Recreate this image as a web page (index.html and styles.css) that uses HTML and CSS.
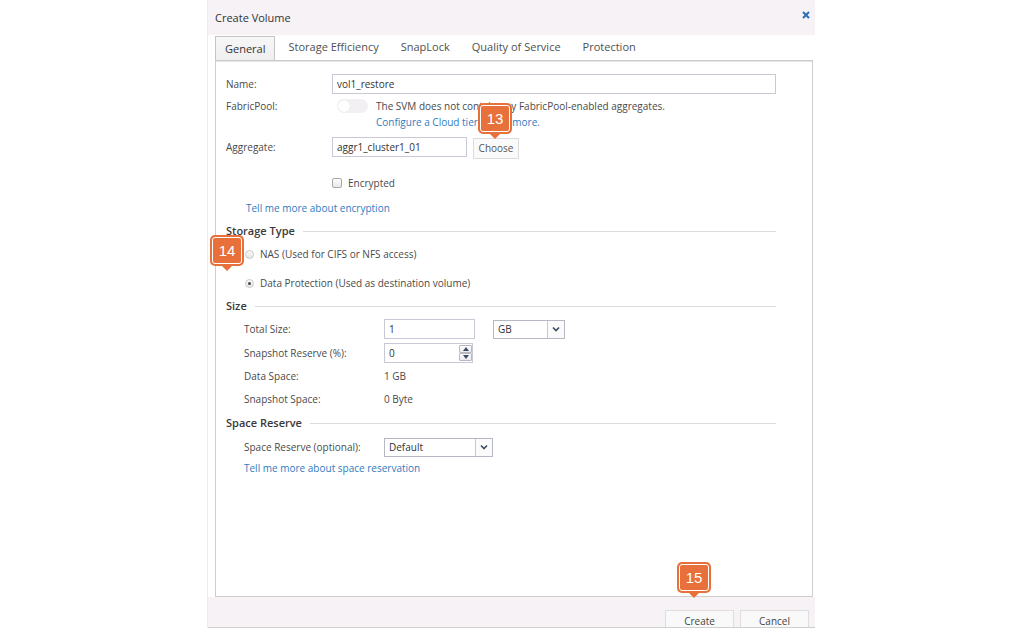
FILE: index.html
```html
<!DOCTYPE html>
<html>
<head>
<meta charset="utf-8">
<link rel="stylesheet" href="styles.css">
</head>
<body>
<div class="dialog">
  <div class="header">
    <span class="title">Create Volume</span>
    <span class="close"><svg width="8" height="8" viewBox="0 0 8 8"><path d="M1 1 L7 7 M7 1 L1 7" stroke="#2b6cb8" stroke-width="2" fill="none"/></svg></span>
  </div>
  <div class="tabs">
    <div class="tab active">General</div>
    <div class="tab">Storage Efficiency</div>
    <div class="tab">SnapLock</div>
    <div class="tab">Quality of Service</div>
    <div class="tab">Protection</div>
  </div>
  <div class="panel">
    <div class="row r-name">
      <span class="lbl">Name:</span>
      <div class="input w-name">vol1_restore</div>
    </div>
    <div class="row r-fabric">
      <span class="lbl">FabricPool:</span>
      <span class="toggle"><span class="knob"></span></span>
      <div class="fabric-text">
        <div class="line">The SVM does not contain any FabricPool-enabled aggregates.</div>
        <div class="line"><span class="link">Configure a Cloud tier.</span> <span class="link">Learn more.</span></div>
      </div>
    </div>
    <div class="row r-aggr">
      <span class="lbl">Aggregate:</span>
      <div class="input w-aggr">aggr1_cluster1_01</div>
      <div class="btn-choose">Choose</div>
    </div>
    <div class="row r-enc">
      <span class="checkbox"></span>
      <span class="txt">Encrypted</span>
    </div>
    <div class="row r-enclink"><span class="link">Tell me more about encryption</span></div>
    <div class="heading h-storage"><span>Storage Type</span><span class="rule"></span></div>
    <div class="row r-nas"><span class="radio"></span><span class="txt">NAS (Used for CIFS or NFS access)</span></div>
    <div class="row r-dp"><span class="radio checked"></span><span class="txt">Data Protection (Used as destination volume)</span></div>
    <div class="heading h-size"><span>Size</span><span class="rule"></span></div>
    <div class="row srow r-total">
      <span class="slbl">Total Size:</span>
      <div class="input w-num">1</div>
      <div class="select w-gb"><span class="sel-val">GB</span><span class="sel-arrow"><svg width="8" height="6" viewBox="0 0 8 6"><path d="M1 1.5 L4 4.5 L7 1.5" fill="none" stroke="#3d4a66" stroke-width="1.6"/></svg></span></div>
    </div>
    <div class="row srow r-snap">
      <span class="slbl">Snapshot Reserve (%):</span>
      <div class="input w-spin"><span class="spin-val">0</span><span class="spin"><span class="sp-btn"><svg width="6" height="4" viewBox="0 0 6 4"><path d="M0 4 L3 0 L6 4Z" fill="#3d4a66"/></svg></span><span class="sp-btn"><svg width="6" height="4" viewBox="0 0 6 4"><path d="M0 0 L3 4 L6 0Z" fill="#3d4a66"/></svg></span></span></div>
    </div>
    <div class="row srow r-data"><span class="slbl">Data Space:</span><span class="txt">1 GB</span></div>
    <div class="row srow r-sspace"><span class="slbl">Snapshot Space:</span><span class="txt">0 Byte</span></div>
    <div class="heading h-reserve"><span>Space Reserve</span><span class="rule"></span></div>
    <div class="row srow r-resopt">
      <span class="slbl">Space Reserve (optional):</span>
      <div class="select w-def"><span class="sel-val">Default</span><span class="sel-arrow"><svg width="8" height="6" viewBox="0 0 8 6"><path d="M1 1.5 L4 4.5 L7 1.5" fill="none" stroke="#3d4a66" stroke-width="1.6"/></svg></span></div>
    </div>
    <div class="row r-reslink"><span class="link">Tell me more about space reservation</span></div>
  </div>
  <div class="footer">
    <div class="btn">Create</div>
    <div class="btn">Cancel</div>
  </div>
</div>
<div class="callout c13"><span>13</span></div>
<div class="callout c14"><span>14</span></div>
<div class="callout c15"><span>15</span></div>
</body>
</html>
```

FILE: styles.css
```css
html, body {
  margin: 0;
  padding: 0;
  background: #ffffff;
}
body {
  width: 1024px;
  height: 634px;
  overflow: hidden;
  position: relative;
  font-family: "Open Sans", "DejaVu Sans", sans-serif;
  font-size: 10px;
  color: #4a4a4a;
}
.dialog {
  margin-left: 207px;
  width: 608px;
  height: 628px;
  display: flex;
  flex-direction: column;
  border-left: 1px solid #ececec;
  box-sizing: border-box;
}
.header {
  height: 35px;
  flex: none;
  background: #f6f2f6;
  display: flex;
  align-items: center;
  justify-content: space-between;
  padding: 0 5px 0 7px;
}
.title {
  font-size: 11px;
  color: #333;
}
.close {
  display: flex;
  margin-top: -6px;
}
.tabs {
  height: 25px;
  flex: none;
  display: flex;
  align-items: flex-end;
  padding-left: 7px;
  background: #fff;
}
.tab {
  height: 24px;
  box-sizing: border-box;
  padding: 0 11px 3px;
  display: flex;
  align-items: center;
  font-size: 11px;
  color: #505050;
}
.tab.active {
  padding: 0 9px 1px;
  margin-right: 2px;
  background: linear-gradient(#f7f7f7, #efefef);
  border: 1px solid #c4c4c4;
  border-bottom: none;
  color: #333;
}
.panel {
  flex: 1;
  margin: 0 2px 0 7px;
  border: 1px solid #cdcdcd;
  box-shadow: inset 0 1px 0 #e4e4e4;
  background: #fff;
  padding: 13px 36px 0 10px;
  display: flex;
  flex-direction: column;
}
.row {
  display: flex;
  align-items: center;
  flex: none;
}
.lbl {
  width: 106px;
  flex: none;
}
.input {
  box-sizing: border-box;
  height: 20px;
  border: 1px solid #c9c9d6;
  background: #fff;
  display: flex;
  align-items: center;
  padding-left: 4px;
  color: #333;
  font-size: 10px;
}
.r-name { height: 20px; }
.w-name { flex: 1; }
.r-fabric {
  margin-top: 4px;
  align-items: flex-start;
}
.r-fabric .lbl { line-height: 16px; }
.toggle {
  margin: 1px 0 0 5px;
  width: 31px;
  height: 14px;
  border-radius: 7px;
  background: #f3f0f3;
  position: relative;
  flex: none;
}
.knob {
  position: absolute;
  left: 1px;
  top: 1px;
  width: 12px;
  height: 12px;
  border-radius: 50%;
  background: #fff;
  box-shadow: 0 0 1px rgba(0,0,0,0.12);
}
.fabric-text {
  margin-left: 8px;
  color: #4a4a4a;
}
.fabric-text .line { line-height: 16px; }
.link { color: #2f7cc0; }
.r-aggr {
  margin-top: 7px;
  height: 20px;
}
.w-aggr { width: 135px; }
.btn-choose {
  margin-left: 6px;
  width: 46px;
  height: 21px;
  box-sizing: border-box;
  border: 1px solid #dcdcdc;
  background: #fafafa;
  display: flex;
  align-items: center;
  justify-content: center;
  color: #555;
  margin-top: 2px;
}
.r-enc {
  margin-top: 18px;
  height: 16px;
  padding-left: 106px;
}
.checkbox {
  width: 10px;
  height: 10px;
  box-sizing: border-box;
  border: 1px solid #a8a8a8;
  border-radius: 2px;
  background: linear-gradient(#fdfdfd, #e9e9e9);
  margin-right: 6px;
}
.r-enclink {
  margin-top: 9px;
  height: 16px;
  padding-left: 20px;
}
.heading {
  display: flex;
  align-items: center;
  height: 16px;
  flex: none;
  font-size: 11px;
  font-weight: 600;
  color: #3a3a3a;
}
.rule {
  flex: 1;
  margin-left: 8px;
  border-top: 1px solid #dcdcdc;
  margin-top: 2px;
}
.h-storage { margin-top: 6px; }
.r-nas {
  margin-top: 8px;
  height: 16px;
  padding-left: 19px;
}
.r-dp {
  margin-top: 13px;
  height: 16px;
  padding-left: 19px;
}
.radio {
  width: 9px;
  height: 9px;
  box-sizing: border-box;
  border-radius: 50%;
  border: 1px solid #c8c8c8;
  background: linear-gradient(#fafafa, #e8e8e8);
  margin-right: 6px;
  position: relative;
}
.radio.checked::after {
  content: "";
  position: absolute;
  left: 2px;
  top: 2px;
  width: 3px;
  height: 3px;
  border-radius: 50%;
  background: #444;
}
.h-size { margin-top: 6px; }
.srow { padding-left: 18px; }
.slbl {
  width: 140px;
  flex: none;
}
.r-total {
  margin-top: 6px;
  height: 20px;
}
.w-num { width: 91px; }
.select {
  box-sizing: border-box;
  height: 19px;
  border: 1px solid #b8b8c4;
  display: flex;
  align-items: stretch;
  background: #fff;
  color: #333;
}
.sel-val {
  flex: 1;
  display: flex;
  align-items: center;
  padding-left: 4px;
}
.sel-arrow {
  width: 16px;
  border-left: 1px solid #c8c8d0;
  display: flex;
  align-items: center;
  justify-content: center;
  background: #fbfbfb;
}
.w-gb {
  width: 72px;
  margin-left: 18px;
}
.r-snap {
  margin-top: 4px;
  height: 20px;
}
.w-spin {
  width: 89px;
  padding-right: 0;
}
.spin-val { flex: 1; }
.spin {
  width: 13px;
  height: 18px;
  display: flex;
  flex-direction: column;
  justify-content: space-between;
  padding: 1px 0;
  box-sizing: border-box;
}
.sp-btn {
  height: 8px;
  box-sizing: border-box;
  border: 1px solid #b8b8c4;
  border-radius: 1px;
  background: linear-gradient(#fefefe, #e9e9ee);
  display: flex;
  align-items: center;
  justify-content: center;
}
.r-data {
  margin-top: 5px;
  height: 16px;
}
.r-sspace {
  margin-top: 7px;
  height: 16px;
}
.h-reserve { margin-top: 7px; }
.r-resopt {
  margin-top: 7px;
  height: 20px;
}
.w-def { width: 109px; }
.r-reslink {
  margin-top: 3px;
  height: 16px;
  padding-left: 18px;
}
.footer {
  height: 31px;
  flex: none;
  background: #f6f2f6;
  border-bottom: 1px solid #cfcfcf;
  display: flex;
  justify-content: flex-end;
  align-items: flex-start;
  gap: 6px;
  padding: 13px 6px 0 0;
  box-sizing: border-box;
  overflow: hidden;
}
.btn {
  width: 69px;
  height: 26px;
  box-sizing: border-box;
  border: 1px solid #dedede;
  background: #f9f9f9;
  display: flex;
  align-items: flex-start;
  justify-content: center;
  padding-top: 3px;
  color: #444;
}
.callout {
  position: absolute;
  width: 34px;
  height: 31px;
  background: #e8703a;
  border-radius: 5px;
  box-sizing: border-box;
  padding: 2px;
}
.callout span {
  display: flex;
  width: 100%;
  height: 100%;
  box-sizing: border-box;
  border: 1.5px solid #fff;
  border-radius: 3px;
  align-items: center;
  justify-content: center;
  color: #fff;
  font-family: "Liberation Sans", Arial, sans-serif;
  font-size: 15px;
}
.callout::after {
  content: "";
  position: absolute;
  left: 12px;
  bottom: -5px;
  border-left: 5px solid transparent;
  border-right: 5px solid transparent;
  border-top: 5px solid #e8703a;
}
.c13 { left: 478px; top: 103px; }
.c14 { left: 210px; top: 235px; }
.c15 { left: 677px; top: 562px; }
```
